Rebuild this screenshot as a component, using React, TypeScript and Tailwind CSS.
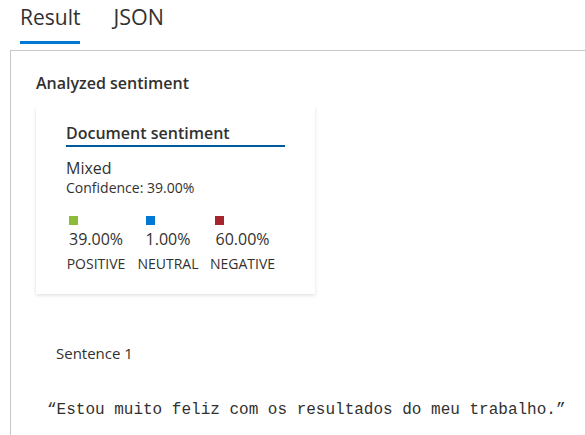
import React from "react";

const sans = { fontFamily: '"Segoe UI", "Open Sans", "Noto Sans", sans-serif' };

function Metric({ color, value, label, width }: { color: string; value: string; label: string; width: string }) {
  return (
    <div className={`flex flex-col items-center ${width}`}>
      <div className="flex flex-col items-start">
        <div className={`h-[9px] w-[9px] ${color}`} />
        <div className="mt-[3px] text-[16px] font-normal leading-[22px] text-[#323130]">{value}</div>
      </div>
      <div className="mt-[5px] whitespace-nowrap text-[14px] leading-[18px] text-[#323130]">{label}</div>
    </div>
  );
}

export default function App() {
  return (
    <div className="flex h-[435px] w-[585px] flex-col overflow-hidden bg-white text-[#323130]" style={sans}>
      <div className="flex h-[50px] shrink-0 items-start gap-[33px] pl-[20px]">
        <div className="flex h-[44px] flex-col justify-start border-b-[3px] border-[#0078d4] pt-[1px]">
          <span className="text-[21px] leading-[32px] text-[#323130]">Result</span>
        </div>
        <div className="pt-[1px]">
          <span className="text-[21.5px] leading-[32px] text-[#323130]">JSON</span>
        </div>
      </div>
      <div className="ml-[10px] flex-1 border-l border-t border-[#c8c8c8] pl-[25px] pt-[21px]">
        <div className="text-[16px] font-semibold leading-[22px]">Analyzed sentiment</div>
        <div className="mt-[12px] flex h-[188px] w-[279px] flex-col bg-white pl-[30px] pt-[16px] shadow-[0_1.6px_3.6px_0_rgba(0,0,0,0.13),0_0.3px_0.9px_0_rgba(0,0,0,0.11)]">
          <div className="w-[219px] border-b-2 border-[#005a9e] pb-[1px] text-[16px] font-semibold leading-[22px]">
            Document sentiment
          </div>
          <div className="mt-[10px] text-[16px] leading-[22px]">Mixed</div>
          <div className="text-[14px] leading-[17px]">Confidence: 39.00%</div>
          <div className="mt-[20px] flex">
            <Metric color="bg-[#8cbd3a]" value="39.00%" label="POSITIVE" width="w-[60px]" />
            <Metric color="bg-[#0078d4]" value="1.00%" label="NEUTRAL" width="w-[84px]" />
            <Metric color="bg-[#a4262c]" value="60.00%" label="NEGATIVE" width="w-[65px]" />
          </div>
        </div>
        <div className="ml-[20px] mt-[48px] text-[15px] leading-[22px]">Sentence 1</div>
        <div
          className="ml-[11px] mt-[35px] whitespace-nowrap text-[16px] leading-[22px] text-[#323130]"
          style={{ fontFamily: '"Liberation Mono", "DejaVu Sans Mono", monospace' }}
        >
          “Estou muito feliz com os resultados do meu trabalho.”
        </div>
      </div>
    </div>
  );
}
